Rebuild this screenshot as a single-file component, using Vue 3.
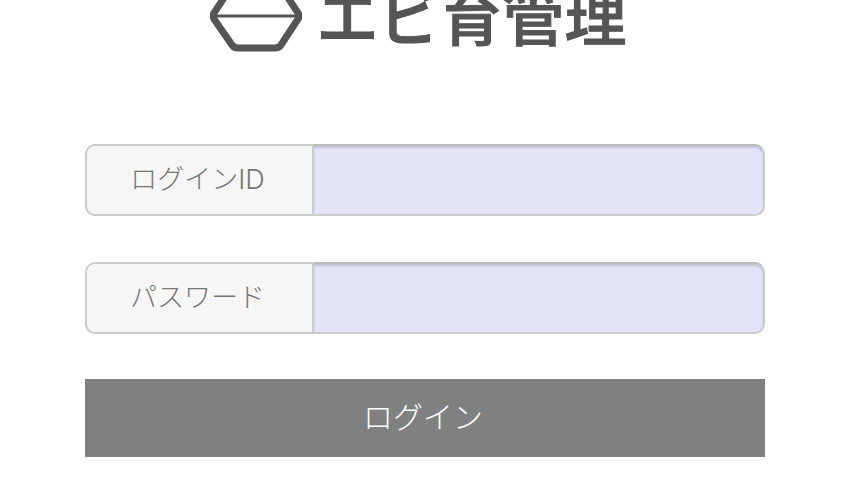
<template>
<main class="login-page">
  <div class="logo">
    <svg class="logo-mark" width="92" height="72" viewBox="0 0 92 72">
      <path d="M27 4 L65 4 Q69 4 71 7 L88 33 Q90 36 88 39 L71 65 Q69 68 65 68 L28 68 Q24 68 22 65 L4 39 Q2 36 4 33 L21 7 Q23 4 27 4 Z" class="mark-outline" />
      <path d="M3 36 L89 36" class="mark-line" />
    </svg>
    <span class="logo-text">エビ育管理</span>
  </div>

  <form class="login-form" @submit.prevent>
    <label v-for="field in fields" :key="field.name" class="field">
      <span class="field-label">{{ field.label }}</span>
      <input class="field-input" :type="field.type" :name="field.name" />
    </label>
    <button class="login-btn" type="submit">ログイン</button>
  </form>
</main>
</template>

<script setup>
const fields = [
  { name: 'login_id', label: 'ログインID', type: 'text' },
  { name: 'password', label: 'パスワード', type: 'password' },
]
</script>

<style>
html,
body {
  overflow: hidden;
  background: #fff;
}
</style>

<style scoped>
.login-page {
  box-sizing: border-box;
  width: 850px;
  height: 500px;
  overflow: hidden;
  padding: 0 85px;
  font-family: Inter, "Noto Sans CJK JP", sans-serif;
}

.logo {
  display: flex;
  align-items: flex-end;
  justify-content: center;
  height: 52px;
  margin-right: 13px;
  gap: 14px;
}

.logo-mark {
  flex: none;
}

.mark-outline {
  fill: none;
  stroke: #555;
  stroke-width: 7;
  stroke-linejoin: round;
}

.mark-line {
  fill: none;
  stroke: #555;
  stroke-width: 3;
}

.logo-text {
  color: #555;
  font-family: "Noto Sans CJK JP", sans-serif;
  font-size: 62px;
  font-weight: 500;
  line-height: 62px;
  margin-bottom: 7px;
  white-space: nowrap;
  -webkit-text-stroke: 1px #555;
}

.login-form {
  display: flex;
  flex-direction: column;
  margin-top: 92px;
}

.field {
  display: flex;
  height: 72px;
  margin-bottom: 46px;
}

.field-label {
  display: flex;
  flex: none;
  align-items: center;
  justify-content: center;
  box-sizing: border-box;
  width: 227px;
  padding: 0 4px 6px 0;
  border: 2px solid #ccc;
  border-right: 0;
  border-radius: 10px 0 0 10px;
  background: #f6f6f6;
  color: #777;
  font-size: 27px;
  font-weight: 300;
}

.field-input {
  flex: 1;
  box-sizing: border-box;
  min-width: 0;
  border: 2px solid #ccc;
  border-top-color: #bbb;
  border-radius: 0 10px 10px 0;
  outline: 0;
  background: #e2e2f8;
  box-shadow: inset 0 2px 2px rgba(0, 0, 0, 0.14);
}

.login-btn {
  height: 78px;
  margin-top: -1px;
  padding: 0 4px 6px 0;
  border: 0;
  background: #7e817f;
  color: #fff;
  font-family: inherit;
  font-size: 30px;
  font-weight: 300;
}
</style>
